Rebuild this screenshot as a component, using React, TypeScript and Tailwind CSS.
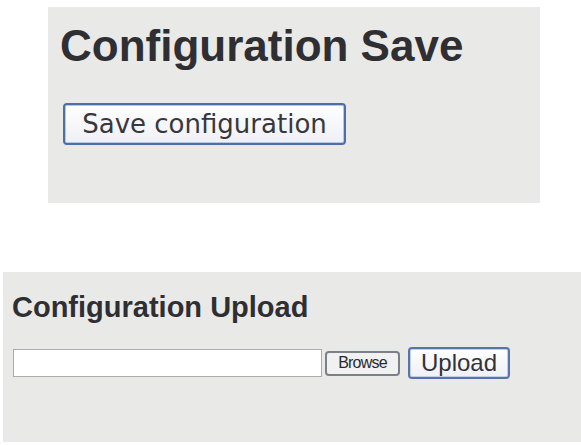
export default function App() {
  return (
    <div className="min-h-[445px] w-[581px] bg-white flex flex-col" style={{ fontFamily: '"Liberation Sans", Arial, sans-serif' }}>
      {/* save panel */}
      <section className="mt-[7px] ml-[48px] w-[492px] h-[196px] bg-[#e9e9e7] pt-[17px] pl-[12px]">
        <h1 className="text-[44px] leading-[44px] font-bold text-[#2f2f33]">Configuration Save</h1>
        <button
          className="mt-[35px] ml-[3px] w-[283px] h-[42px] rounded-[4px] border-2 border-[#4d6ea6] bg-gradient-to-b from-white to-[#eef0f6] text-[26px] leading-none text-[#38383c] shadow-[inset_0_0_0_1px_#b9c8e2]"
          style={{ fontFamily: '"DejaVu Sans", Verdana, sans-serif' }}
        >
          Save configuration
        </button>
      </section>

      {/* upload panel */}
      <section className="mt-[69px] ml-[3px] w-[578px] h-[170px] bg-[#e9e9e7] pt-[21px] pl-[10px]">
        <h2 className="text-[29px] leading-[29px] font-bold text-[#2f2f33] -ml-[1px]">Configuration Upload</h2>
        <div className="mt-[25px] h-[32px] flex items-center">
          <input
            type="text"
            className="w-[309px] h-[28px] bg-white border border-[#a9acb3] outline-none"
          />
          <button className="ml-[3px] w-[75px] h-[25px] rounded-[4px] border-2 border-[#7c808a] bg-[#f1f1f1] text-[16px] leading-none text-[#2a2a2e] tracking-[-0.8px]">
            Browse
          </button>
          <button className="ml-[8px] w-[102px] h-[32px] rounded-[4px] border-2 border-[#5874ab] bg-gradient-to-b from-white to-[#eef0f6] text-[24px] leading-none text-[#333337] shadow-[inset_0_0_0_1px_#c2cfe6]">
            Upload
          </button>
        </div>
      </section>
    </div>
  );
}
